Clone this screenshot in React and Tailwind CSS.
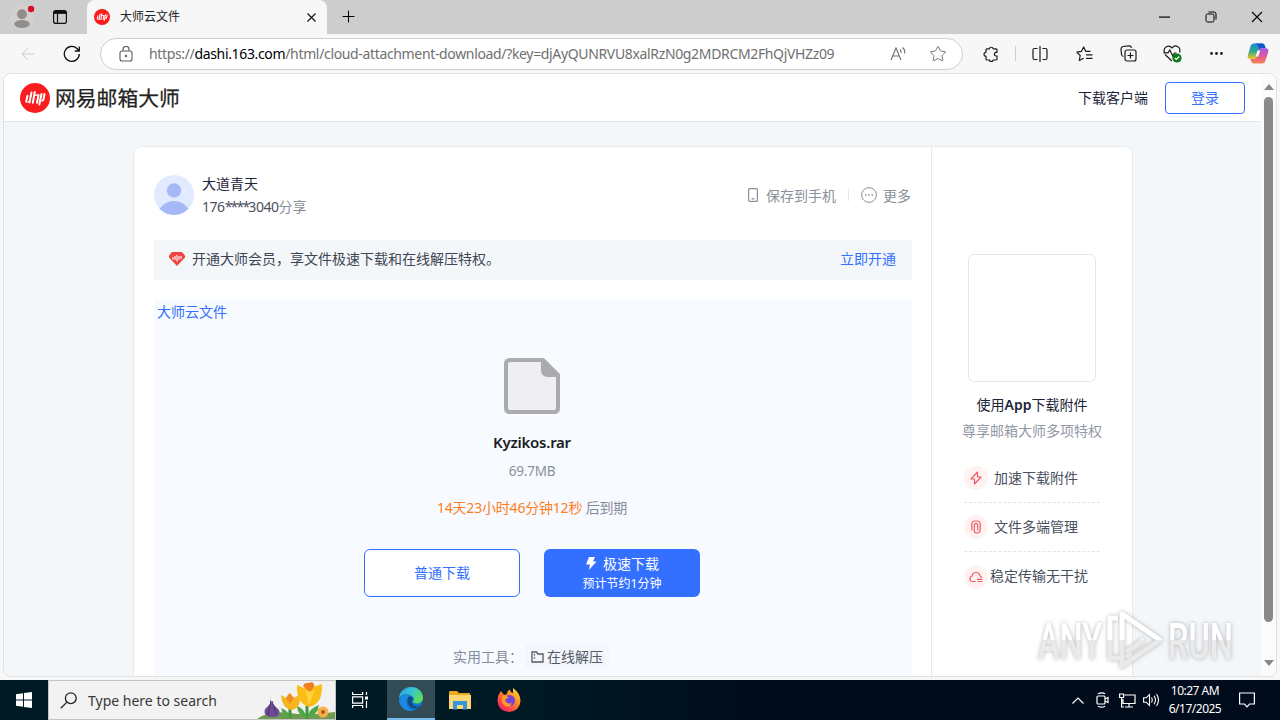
import React from "react";
import { Plus, Star, MoreHorizontal, ArrowLeft } from "lucide-react";

function MailLogo({ className }) {
  return (
    <svg viewBox="0 0 30 30" className={className}>
      <circle cx="15" cy="15" r="15" fill="#fb1c20" />
      <g stroke="#fff" strokeLinecap="round" strokeLinejoin="round" fill="none">
        <path d="M7.500 12.800L6.200 18.500M11.500 9.500L9.500 19.500M14.800 9L12.800 19.800M18.500 12L17 19.800M21.500 11L19.300 21.500M24.500 11L23.300 17" strokeWidth="2" />
        <path d="M6.500 19h3M15.500 12.200h3M20.500 17.800h2.500" strokeWidth="1.200" />
      </g>
    </svg>
  );
}

function TitleBar() {
  return (
    <div className="h-[34px] shrink-0 bg-[#cdcdcd] flex items-end">
      <div className="w-[87px] h-[34px] flex items-center">
        <svg width="28" height="28" viewBox="0 0 28 28" className="ml-2">
          <circle cx="14" cy="14" r="12" fill="#d3d0ce" />
          <circle cx="14" cy="11.300" r="5" fill="#918d8a" />
          <ellipse cx="14" cy="21" rx="7.800" ry="4" fill="#918d8a" />
          <circle cx="23" cy="6" r="3.200" fill="#d50f25" />
        </svg>
        <svg width="14" height="14" viewBox="0 0 14 14" className="ml-[17px]" fill="none" stroke="#111">
          <rect x=".6" y=".6" width="12.800" height="12.800" rx="2.200" strokeWidth="1.200" />
          <path d="M1 2.400h12" strokeWidth="3" />
          <path d="M4.500 4v9.500" strokeWidth="1.200" />
        </svg>
      </div>
      <div className="w-[240px] h-[34px] rounded-t-lg bg-[#f7f7f7] flex items-center">
        <MailLogo className="w-4 h-4 ml-[7px]" />
        <span className="ml-[10px] text-[12px] leading-4 text-[#222]">大师云文件</span>
        <svg width="9" height="9" viewBox="0 0 9 9" stroke="#111" strokeWidth="1.100" className="ml-auto mr-[11px]">
          <path d="M.5.5l8 8M8.500.5l-8 8" />
        </svg>
      </div>
      <Plus size={19} strokeWidth={1.3} className="ml-3 mb-2 text-black" />
      <div className="ml-auto h-[34px] flex items-center pr-[17px] text-black">
        <svg width="11" height="2" viewBox="0 0 11 2" fill="#000">
          <path d="M0 .5h11v1.200H0z" />
        </svg>
        <svg width="12" height="12" viewBox="0 0 12 12" fill="none" stroke="currentColor" className="ml-[35px]">
          <rect x="1" y="3" width="8" height="8" rx="1.500" />
          <path d="M3.500 1H9a2 2 0 0 1 2 2v5.500" />
        </svg>
        <svg width="12" height="12" viewBox="0 0 12 12" stroke="currentColor" strokeWidth="1.100" className="ml-[34px]">
          <path d="M1 1l10 10M11 1L1 11" />
        </svg>
      </div>
    </div>
  );
}

function Copilot() {
  return (
    <svg width="22" height="21" viewBox="0 0 22 21">
      <defs>
        <linearGradient id="cpA" x1="0" y1="0" x2="0" y2="1">
          <stop offset="0" stopColor="#1a8be0" />
          <stop offset=".5" stopColor="#2fa88c" />
          <stop offset="1" stopColor="#f5c91c" />
        </linearGradient>
        <linearGradient id="cpB" x1="0" y1="0" x2="0" y2="1">
          <stop offset="0" stopColor="#a45ae6" />
          <stop offset=".5" stopColor="#e4569a" />
          <stop offset="1" stopColor="#fa8350" />
        </linearGradient>
      </defs>
      <path d="M7 .5h8.200c1.500 0 2.300 1 2.700 2.400l.7 2.400h-3.400c-2 0-2.800 1-3.300 2.800l-1.800 6c-.5 1.500-1 2-2.400 2H3.200C.9 16.100.2 14.500.8 12.200L3.500 3.500C4.200 1.300 5 .5 7 .5z" fill="url(#cpA)" />
      <path d="M7 .5h8.200c1.500 0 2.300 1 2.700 2.400l.7 2.400h-3.400c-1.500 0-2.200.4-2.700 1.400L11 3C10.500 1.400 9.500.5 7 .5z" fill="#1654c9" />
      <path d="M15 20.500H6.800c-1.500 0-2.300-1-2.700-2.400l-.7-2h3.500c2 0 2.800-1 3.300-2.800l1.900-6c.5-1.500 1-2 2.300-2h4.400c2.300 0 3 1.600 2.400 3.900l-2.700 8.300c-.7 2.200-1.500 3-3.500 3z" fill="url(#cpB)" />
      <path d="M10.500 7.500h2.800L11.300 13.500H8.500z" fill="#f7f7f7" />
    </svg>
  );
}

function ToolBar() {
  return (
    <div className="h-[39px] shrink-0 flex items-center bg-[#f7f7f7] text-[#1b1b1b]">
      <ArrowLeft size={20} strokeWidth={1.1} className="ml-[18px] text-[#c6c6c6]" />
      <svg width="18" height="18" viewBox="0 0 18 18" fill="none" stroke="#111" strokeWidth="1.300" className="ml-[25px]">
        <path d="M16.300 9A7.500 7.500 0 1 1 14 3.500L16.300 6M16.300 1.500V6h-4.500" />
      </svg>
      <div className="ml-[19px] w-[863px] h-8 rounded-full border border-[#cfcfcf] bg-white flex items-center text-[#707070]">
        <svg width="14" height="16" viewBox="0 0 14 16" fill="none" stroke="#5c5c5c" strokeWidth="1.100" className="ml-[18px]">
          <rect x="1" y="5" width="12" height="10" rx="2" />
          <path d="M4 5V3.500a3 3 0 0 1 6 0V5" />
          <circle cx="7" cy="10" r=".6" fill="#5c5c5c" />
        </svg>
        <span className="ml-4 text-[14px] tracking-[-0.345px] whitespace-nowrap w-[700px]">
          https://<span className="text-black">dashi.163.com</span>
          /html/cloud-attachment-download/?key=djAyQUNRVU8xalRzN0g2MDRCM2FhQjVHZz09
        </span>
        <svg width="17" height="16" viewBox="0 0 17 16" fill="none" stroke="#707070" strokeWidth="1.100" className="ml-[41px]">
          <path d="M1 14L6 2l5 12M2.800 10h6.500M10 3.500q1.500 1.500 1 3.500M12.500 1.500q3 2.500 2 6" />
        </svg>
        <Star size={18} strokeWidth={1.3} className="ml-[22px]" />
      </div>
      <svg width="16" height="16" viewBox="0 0 16 16" fill="none" stroke="currentColor" strokeWidth="1.200" strokeLinejoin="round" className="ml-[20px]">
        <path d="M4 2.800H6.300A2 2 0 0 1 10.200 2.800H13Q14 2.800 14 3.800V6.300H12.800A1.900 1.900 0 0 0 12.800 10H14V13Q14 14 13 14H10.200A2 2 0 0 1 6.300 14H4Q3 14 3 13V10.300A2 2 0 0 1 3 6.300V3.800Q3 2.800 4 2.800z" />
      </svg>
      <div className="ml-4 w-px h-[15px] bg-[#cfcfcf]" />
      <svg width="16" height="16" viewBox="0 0 16 16" fill="none" stroke="currentColor" strokeWidth="1.200" className="ml-4">
        <path d="M5.500 2.500h-3q-1.500 0-1.500 1.500v8q0 1.500 1.500 1.500h3M10.500 2.500h3Q15 2.500 15 4v8q0 1.500-1.500 1.500h-3M8 0v16" />
      </svg>
      <svg width="17" height="16" viewBox="0 0 17 16" fill="none" stroke="currentColor" strokeWidth="1.200" strokeLinejoin="round" className="ml-[28px]">
        <path d="M14.500 5.300H9.700L7.700 1 5.500 5.300l-4.700.8L4.200 9.500l-.9 5 4.400-2.300M10 8.800h6.500M10 12.300h6.500" />
      </svg>
      <svg width="17" height="17" viewBox="0 0 17 17" fill="none" stroke="currentColor" strokeWidth="1.200" className="ml-[27px]">
        <path d="M3.500 11.500Q1.800 11 1.500 9.500L1 4Q1 2 3 1.500L9 .8q2-.2 2.500 2" />
        <rect x="5" y="5" width="11" height="11" rx="2" />
        <path d="M10.500 7.500v6M7.500 10.500h6" />
      </svg>
      <svg width="19" height="18" viewBox="0 0 19 18" fill="none" stroke="currentColor" strokeWidth="1.200" className="ml-[26px]">
        <path d="M1.500 7.500C-.5 2 6-1 9 3c3-4 9.500-1.500 7.500 4.500M2 9.500L9 16M.5 7.800H5L6.800 5l3 6L11.500 8h2" />
        <circle cx="14" cy="13" r="4.600" fill="#0f7b1c" stroke="none" />
        <path d="M11.800 13l1.500 1.500L16.200 11.500" stroke="#fff" />
      </svg>
      <MoreHorizontal size={17} strokeWidth={2} className="ml-[26px]" />
      <div className="ml-[22px]"><Copilot /></div>
    </div>
  );
}

function SiteHeader() {
  return (
    <div className="h-12 shrink-0 bg-white border-b border-[#e3e5e8] flex items-center pl-4 pr-4">
      <MailLogo className="w-[30px] h-[30px]" />
      <span className="ml-[5px] text-[20.8px] leading-6 text-[#222] [-webkit-text-stroke:0.25px_#222]">网易邮箱大师</span>
      <span className="ml-auto text-[14px] text-[#1c2438]">下载客户端</span>
      <div className="ml-[17px] w-20 h-8 rounded border border-[#3370ff] text-[#3370ff] text-[14px] flex items-center justify-center">
        登录
      </div>
    </div>
  );
}

function FilePanel() {
  return (
    <div className="w-[758px] h-[420px] bg-[#f7faff] flex flex-col">
      <div className="h-6 pl-[3px] text-[14px] leading-[23px] text-[#3370ff]">大师云文件</div>
      <div className="flex flex-col items-center pr-[2px]">
        <svg width="56" height="56" viewBox="0 0 56 56" className="mt-[34px]">
          <path d="M6 2h33l15 15v33q0 4-4 4H6q-4 0-4-4V6q0-4 4-4z" fill="#eeeef3" stroke="#ababae" strokeWidth="4" strokeLinejoin="round" />
          <path d="M37 0h2l17 17v2H44q-7 0-7-7z" fill="#ababae" />
        </svg>
        <div className="mt-[16px] text-[15px] leading-6 font-semibold text-[#1a1c22] tracking-[-0.25px]">Kyzikos.rar</div>
        <div className="mt-[5px] text-[13.5px] leading-6 text-[#8a909c] tracking-[-0.2px]">69.7MB</div>
        <div className="mt-[13px] text-[14px] leading-6 text-[#858c9b] tracking-[-0.2px]">
          <span className="text-[#ff7d1a]">14天23小时46分钟12秒</span> 后到期
        </div>
        <div className="mt-[29px] flex gap-6">
          <div className="w-[156px] h-12 rounded-md border border-[#3370ff] bg-white text-[#3370ff] text-[14px] leading-5 flex items-center justify-center">
            普通下载
          </div>
          <div className="w-[156px] h-12 rounded-md bg-[#3370ff] text-white flex flex-col items-center justify-center">
            <div className="flex items-center gap-1.5 text-[14px] leading-5">
              <svg width="12" height="13" viewBox="0 0 12 13" fill="#fff">
                <path d="M4 0h6L8 4.500h3.500L4 13l1-5.500H1z" />
              </svg>
              极速下载
            </div>
            <div className="text-[12px] leading-[19px]">预计节约1分钟</div>
          </div>
        </div>
        <div className="mt-[48px] pr-[2px] flex items-center text-[14px] leading-6">
          <span className="text-[#858c9b]">实用工具：</span>
          <div className="ml-[2px] px-1.5 flex items-center gap-[3px] bg-[#f3f6fa] text-[#535a68]">
            <svg width="13" height="12" viewBox="0 0 13 12" fill="none" stroke="currentColor" strokeWidth="1.300">
              <path d="M1 1h4.500l1.500 2h5v8H1zM3.500 3v1.500M3.500 6v1.500" />
            </svg>
            在线解压
          </div>
        </div>
      </div>
    </div>
  );
}

function Perk({ icon, label, last, tight }) {
  return (
    <div
      className={[
        "w-[136px] h-[49px] flex items-center text-[14px] text-[#4a505e]",
        last ? "" : "border-b border-dashed border-[#e4e4e4]",
      ].join(" ")}
    >
      <div className="w-6 h-6 rounded-full bg-[#fff2f1] grid place-items-center">{icon}</div>
      <span className={["leading-5", tight ? "ml-[2px] pb-[2px]" : "ml-[6px]"].join(" ")}>{label}</span>
    </div>
  );
}

const perkIcon = {
  width: 14,
  height: 14,
  viewBox: "0 0 14 14",
  fill: "none",
  stroke: "#ec5b61",
  strokeWidth: 1.2,
  strokeLinejoin: "round",
};

function AppPromo() {
  return (
    <div className="w-[200px] flex flex-col items-center pt-[107px]">
      <div className="w-32 h-32 rounded-md border border-[#e4e6ea]" />
      <div className="mt-[11px] text-[14px] leading-6 text-[#1c2438] whitespace-nowrap">
        使用<span className="font-semibold">App</span>下载附件
      </div>
      <div className="mt-[2px] text-[14px] leading-6 text-[#9298a5] whitespace-nowrap">尊享邮箱大师多项特权</div>
      <div className="mt-[11px]">
        <Perk label="加速下载附件" icon={<svg {...perkIcon}><path d="M8.500 1L2 8h3.500v5L12 6H8.500z" /></svg>} />
        <Perk
          label="文件多端管理"
          icon={
            <svg {...perkIcon}>
              <path d="M2.800 10.500V4.200q0-3.200 3.200-3.200h2q3.200 0 3.200 3.200v5.600q0 3.200-3.200 3.200H7.500q-2.200 0-2.200-2.200V5q0-1.600 1.700-1.600T8.700 5v5.500" />
            </svg>
          }
        />
        <Perk
          last
          tight
          label="稳定传输无干扰"
          icon={
            <svg {...perkIcon}>
              <path d="M6.500 11.500H4Q1 11.500 1 8.800 1 6.500 3.200 6 3.500 2.500 7 2.500t4 3.500q1.500.5 1.500 2M8 9.300h5.500M13.500 11.500H8.500" />
            </svg>
          }
        />
      </div>
    </div>
  );
}

function Card() {
  return (
    <div className="ml-[129px] mt-[24px] w-[1000px] h-[560px] shrink-0 rounded-t-lg border border-[#e9ecef] bg-white flex">
      <div className="w-[798px] border-r border-[#e6e8eb] pl-5 pt-[28px]">
        <div className="flex items-center w-[758px] h-10">
          <svg width="40" height="40" viewBox="0 0 40 40">
            <circle cx="20" cy="20" r="20" fill="#e2eaff" />
            <circle cx="20" cy="15.500" r="7.200" fill="#a6b8f6" />
            <path d="M5.500 33.800Q11 26 20 26t14.500 7.800Q28.500 40 20 40T5.500 33.800z" fill="#a6b8f6" />
          </svg>
          <div className="ml-2 text-[14px] leading-[23px] text-[#1c2438]">
            <div>大道青天</div>
            <div className="text-[#4a505e] tracking-[-0.45px]">
              176<span className="tracking-[-1.8px]">****</span>3040
              <span className="text-[#8a909c] tracking-normal">分享</span>
            </div>
          </div>
          <div className="ml-auto pr-px flex items-center text-[14px] text-[#8a909c]">
            <svg width="10" height="14" viewBox="0 0 10 14" fill="none" stroke="currentColor" strokeWidth="1.200">
              <rect x=".6" y=".6" width="8.800" height="12.800" rx="1" />
              <path d="M3.500 10.800h3" />
            </svg>
            <span className="ml-2">保存到手机</span>
            <div className="mx-3 w-px h-3 bg-[#e4e6ea]" />
            <svg width="16" height="16" viewBox="0 0 16 16" fill="none" stroke="currentColor">
              <circle cx="8" cy="8" r="7.400" />
              <path d="M4 8h1.500M7.250 8h1.500M10.500 8H12" strokeWidth="1.500" />
            </svg>
            <span className="ml-1.5">更多</span>
          </div>
        </div>
        <div className="mt-[25px] w-[758px] h-10 bg-[#f4f7fa] flex items-center pl-[15px] pr-4 text-[14px] leading-5 text-[#3d4452]">
          <svg width="16" height="14" viewBox="0 0 16 14" className="-mt-[2px]">
            <path d="M3 0h10L16 3.500V5.500L8 14 0 5.500V3.500z" fill="#f04444" />
            <path d="M4 5v2.500M6 4v4M8 3v6.500M10 4v4M12 4v3" stroke="#fff" strokeWidth="1.100" />
          </svg>
          <span className="ml-[7px] pb-[2px]">开通大师会员，享文件极速下载和在线解压特权。</span>
          <span className="ml-auto pb-[2px] text-[#3370ff]">立即开通</span>
        </div>
        <div className="mt-5">
          <FilePanel />
        </div>
      </div>
      <AppPromo />
    </div>
  );
}

function ScrollBar() {
  return (
    <div className="w-[15px] shrink-0 bg-[#fbfbfb] flex flex-col items-center">
      <svg width="10" height="6" viewBox="0 0 10 6" className="mt-[10px]"><path d="M5 0l5 6H0z" fill="#888" /></svg>
      <div className="mt-[7px] w-[9px] h-[525px] rounded-full bg-[#8a8a8a]" />
      <svg width="10" height="6" viewBox="0 0 10 6" className="mt-[38px]"><path d="M0 0h10L5 6z" fill="#888" /></svg>
    </div>
  );
}

function Watermark() {
  return (
    <svg
      width="236"
      height="80"
      viewBox="-6 -4 236 80"
      className="absolute left-[1028px] top-[604px] overflow-visible drop-shadow-[0_0_2px_rgba(0,0,0,0.28)]"
    >
      <defs>
        <linearGradient id="wm" x1="0" y1="0" x2="0" y2="64" gradientUnits="userSpaceOnUse">
          <stop offset=".5" stopColor="#fff" />
          <stop offset=".5" stopColor="#eaeaea" />
        </linearGradient>
      </defs>
      <g fill="url(#wm)" fontFamily="Roboto, sans-serif" fontSize="50" fontWeight="500">
        <text x="4" y="51" textLength="64" lengthAdjust="spacingAndGlyphs">ANY</text>
        <text x="134" y="51" textLength="65" lengthAdjust="spacingAndGlyphs">RUN</text>
      </g>
      <g fill="none" stroke="url(#wm)" strokeWidth="5" strokeLinejoin="round">
        <path d="M88 6l38 26-38 26z" />
        <path d="M84 10h-8v40h11M92 44l18-12" />
      </g>
    </svg>
  );
}

function EdgeIcon() {
  return (
    <svg width="24" height="24" viewBox="0 0 24 24">
      <defs>
        <linearGradient id="edTop" x1="0" y1="0" x2="1" y2=".5">
          <stop offset="0" stopColor="#2a9ee0" />
          <stop offset=".5" stopColor="#35c1d4" />
          <stop offset="1" stopColor="#5ddb5b" />
        </linearGradient>
      </defs>
      <circle cx="12" cy="12" r="12" fill="#1474c9" />
      <path d="M0 11C1 4 6 0 12 0c7 0 12 5 12 10.500 0 3.500-2.500 6-6 6-3 0-4.500-1-4-2 1.200-1.500 1-3 .2-4.200C11 6 3 6 0 11z" fill="url(#edTop)" />
      <path d="M8.500 11C6 15 8 22 14 23.800 8 25 1 21 .2 14 1 9 6 7 11 8.200 9.800 8.800 9 10 8.500 11z" fill="#1b8ade" />
      <path d="M9 11c-2 5 2 11 8 10.500l5-2.500c-4 1.500-8 .5-9.300-3.500-.3-1 1.200-2 1-3.500C13 9 10 9 9 11z" fill="#114a8b" />
      <path d="M21.500 18q1 .2 0 1.500Q18 24 12 24q6-.5 9.500-6z" fill="#304c52" />
    </svg>
  );
}

function Flowers() {
  return (
    <svg width="78" height="38" viewBox="0 0 78 38">
      <path d="M0 38Q12 29 32 32t46-1v7z" fill="#6f9b50" />
      <path d="M14 15q-1 6 2 8l6 6q2 5-3 7h-7q-6-2-4-8l5-5z" fill="#6e4b95" />
      <path d="M14 20l-3 14M15 20l4 13" stroke="#49306d" fill="none" />
      <path d="M33 27v10M50 25v13" stroke="#3f943e" strokeWidth="3" />
      <path d="M33 37q-2-8-9-10 2 9 9 10zM50 37q-3-10-10-12 0 9 10 12zM50 37q2-10 12-13-1 10-12 13z" fill="#50a746" />
      <path d="M24 14l5 3 3-5 4 5 7-3q1 14-9 15-9-2-10-15z" fill="#f7b51c" />
      <path d="M29 17l4-5 4 5-4 6z" fill="#f08c22" />
      <path d="M40 4l7 3 4-5 5 4 9-3q1 20-13 23Q39 22 40 4z" fill="#fbbd18" />
      <path d="M46 5q1-3 4-3t5-1q3 2 2 5l-4 5z" fill="#f08020" />
      <path d="M48 9l4 15 6-16q-5 5-10 1z" fill="#ffd33c" />
      <circle cx="66" cy="31" r="5.500" fill="#f6b04b" />
      <circle cx="66" cy="31" r="2" fill="#b15c19" />
    </svg>
  );
}

function TaskBar() {
  return (
    <div className="h-10 shrink-0 flex bg-linear-to-r from-[#001a24] from-40% to-[#000b1c] to-60% text-white">
      <div className="w-12 flex items-center justify-center">
        <svg width="16" height="16" viewBox="0 0 16 16" fill="#fff">
          <path d="M0 2.200l7-1v6.300H0zM8 1l8-1v7.500H8zM0 8.500h7v6.300l-7-1zM8 8.500h8V16l-8-1z" />
        </svg>
      </div>
      <div className="w-[288px] border border-[#c4c4c4] bg-[#f2f2f2] flex items-center text-[#383838]">
        <svg width="17" height="17" viewBox="0 0 17 17" fill="none" stroke="#222" strokeWidth="1.300" className="ml-[11px]">
          <circle cx="10.800" cy="6.200" r="5.400" />
          <path d="M6.900 10.100L.8 16.200" />
        </svg>
        <span className="ml-[11px] text-[14px] whitespace-nowrap">Type here to search</span>
        <div className="ml-auto self-end"><Flowers /></div>
      </div>
      <div className="w-[50px] pr-[2px] flex items-center justify-center">
        <svg width="17" height="16" viewBox="0 0 17 16" fill="none" stroke="#fff" strokeWidth="1.200">
          <path d="M.6 0v2.500h10V0M.6 16v-2.500h10V16M.6 4.800h10v6.400H.6zM14.500 0v3M14.500 9v7" />
          <path d="M13 4.500h3v3h-3z" fill="#fff" stroke="none" />
        </svg>
      </div>
      <div className="ml-px w-12 bg-[#324b54] border-b-2 border-[#76b9ed] flex items-center justify-center"><EdgeIcon /></div>
      <div className="w-[49px] flex items-center justify-center">
        <svg width="22" height="19" viewBox="0 0 22 19">
          <path d="M0 1q0-1 1-1h7l2 2h11v15q0 1-1 1H0z" fill="#e9a820" />
          <path d="M0 4h22v14H0z" fill="#fcd775" />
          <path d="M4 10h14v8.500h-4V14H8v4.500H4z" fill="#3795d9" />
        </svg>
      </div>
      <div className="w-[49px] flex items-center justify-center">
        <svg width="24" height="24" viewBox="0 0 24 24">
          <defs>
            <linearGradient id="ff" x1="1" y1="0" x2=".2" y2="1">
              <stop offset="0" stopColor="#ffe735" />
              <stop offset=".45" stopColor="#ff8a20" />
              <stop offset="1" stopColor="#f5156c" />
            </linearGradient>
          </defs>
          <path d="M4 3l3 4 3-1q0-3 3-4.500Q13 4 16 5V0q7 5 7.500 12.500Q23 23 12 24 1 23 .5 13 .5 7 4 3z" fill="url(#ff)" />
          <circle cx="12.500" cy="12.500" r="5.500" fill="#7542d8" />
          <path d="M5 8q4-2 7 2-3 0-4 2 2 5 7 3-2 5-7 3-4-3-3-10z" fill="#ff9a28" />
        </svg>
      </div>
      <div className="ml-auto flex items-center pr-[25px]">
        <svg width="12" height="7" viewBox="0 0 12 7" fill="none" stroke="#fff" strokeWidth="1.200"><path d="M.5 6.500L6 1l5.500 5.500" /></svg>
        <svg width="13" height="16" viewBox="0 0 13 16" fill="none" stroke="#fff" strokeWidth="1.200" className="ml-3">
          <rect x="1" y="4" width="8" height="8" rx="1" />
          <path d="M9 7l3-1.500v5L9 9M2 1.800q4-2 7 0M2 14.200q4 2 7 0" />
        </svg>
        <svg width="17" height="15" viewBox="0 0 17 15" fill="none" stroke="#fff" strokeWidth="1.200" className="ml-[10px]">
          <path d="M5.500 2H16v8.500H4V6M10 10.500V14M6 14h8M.6 1h4v3.500h-4zM2.600 4.500V14H5" />
        </svg>
        <svg width="17" height="14" viewBox="0 0 17 14" fill="none" stroke="#fff" strokeWidth="1.100" className="ml-[7px]">
          <path d="M.6 4.800h2.600L6.500 1.500v11L3.200 9.200H.6zM8.500 4.500q1.500 2.500 0 5M11 2.800q3 4.200 0 8.400M13.500 1q4 6 0 12" />
        </svg>
        <div className="ml-2 w-[54px] text-[12px] leading-[18px] tracking-[-0.5px] text-center whitespace-nowrap flex flex-col items-center">
          <span>10:27 AM</span>
          <span>6/17/2025</span>
        </div>
        <svg width="16" height="16" viewBox="0 0 16 16" fill="none" stroke="#fff" strokeWidth="1.200" className="ml-[17px]">
          <path d="M.6 1h14.800v11h-4.900L8 14.800 5.500 12H.6z" />
        </svg>
      </div>
    </div>
  );
}

export default function App() {
  return (
    <div className="relative w-[1280px] h-[720px] overflow-hidden flex flex-col bg-[#f7f7f7] font-['Noto_Sans','Noto_Sans_CJK_SC',sans-serif]">
      <TitleBar />
      <ToolBar />
      <div className="ml-[3px] mr-[3px] h-[604px] shrink-0 rounded-lg border border-[#e0e0e0] bg-[#f4f7fa] overflow-hidden flex">
        <div className="flex-1 flex flex-col overflow-hidden">
          <SiteHeader />
          <Card />
        </div>
        <ScrollBar />
      </div>
      <div className="h-[3px] shrink-0" />
      <TaskBar />
      <Watermark />
    </div>
  );
}
